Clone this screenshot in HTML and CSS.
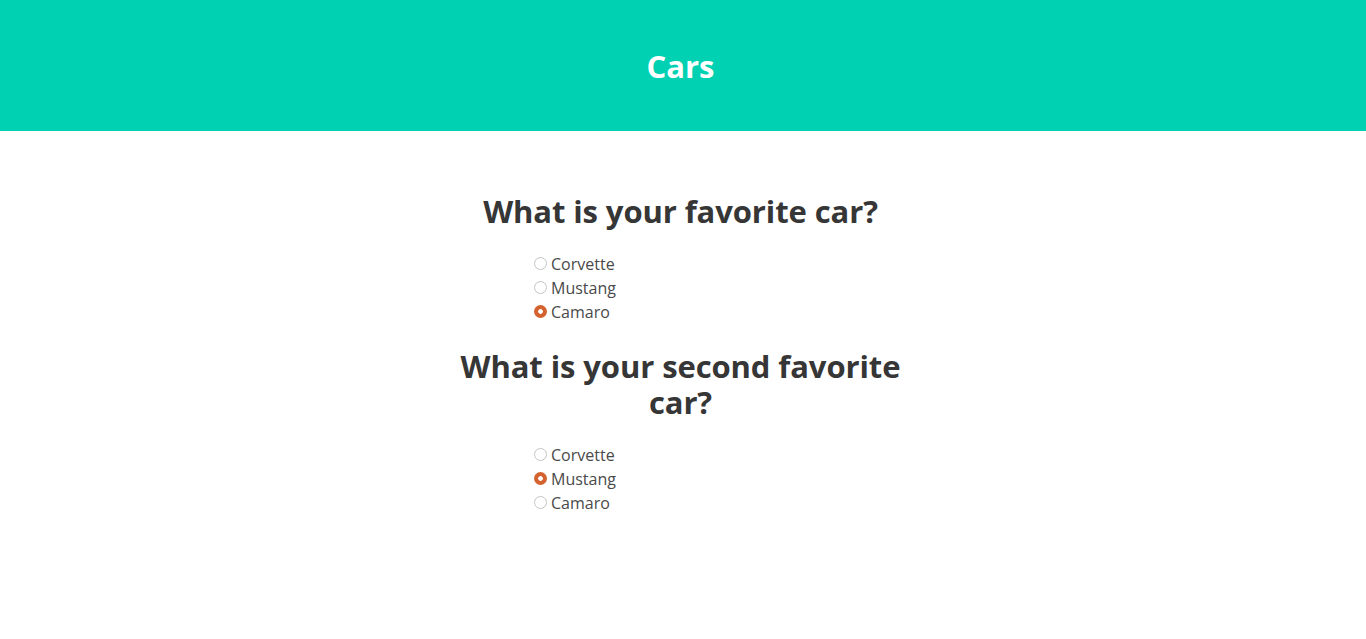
FILE: index.html
```html
<!DOCTYPE html>
<html lang="en">
<head>
<meta charset="utf-8">
<title>Cars</title>
<link rel="stylesheet" href="styles.css">
</head>
<body>
<section class="hero">
  <h1 class="hero-title">Cars</h1>
</section>
<main class="main">
  <div class="column">
    <form class="question">
      <h2 class="title">What is your favorite car?</h2>
      <div class="options">
        <label class="option"><input type="radio" name="fav1"><span>Corvette</span></label>
        <label class="option"><input type="radio" name="fav1"><span>Mustang</span></label>
        <label class="option"><input type="radio" name="fav1" checked><span>Camaro</span></label>
      </div>
    </form>
    <form class="question">
      <h2 class="title">What is your second favorite car?</h2>
      <div class="options">
        <label class="option"><input type="radio" name="fav2"><span>Corvette</span></label>
        <label class="option"><input type="radio" name="fav2" checked><span>Mustang</span></label>
        <label class="option"><input type="radio" name="fav2"><span>Camaro</span></label>
      </div>
    </form>
  </div>
</main>
</body>
</html>
```
FILE: styles.css
```css
* { box-sizing: border-box; }
html, body { margin: 0; padding: 0; }
body {
  font-family: "Open Sans", "Noto Sans", "DejaVu Sans", sans-serif;
  color: #4a4a4a;
  background: #fff;
  font-size: 16px;
  line-height: 24px;
}
.hero {
  background: #00d1b2;
  height: 131px;
  display: flex;
  align-items: center;
  justify-content: center;
  padding-right: 5px;
}
.hero-title {
  margin: 0;
  color: #fff;
  font-size: 31px;
  font-weight: 700;
  line-height: 36px;
  letter-spacing: 0;
}
.main {
  display: flex;
  justify-content: center;
  padding: 62px 5px 0 0;
}
.column {
  width: 455px;
  display: flex;
  flex-direction: column;
}
.question { display: flex; flex-direction: column; }
.question + .question { margin-top: 24px; }
.title {
  margin: 0 0 23px;
  text-align: center;
  color: #363636;
  font-size: 31px;
  font-weight: 700;
  line-height: 36px;
  letter-spacing: -0.1px;
}
.options {
  display: flex;
  flex-direction: column;
  padding-left: 81px;
}
.option {
  display: flex;
  align-items: center;
  height: 24px;
  font-size: 16px;
  color: #4a4a4a;
  cursor: pointer;
}
.option input {
  appearance: none;
  -webkit-appearance: none;
  margin: 0 4px 0 0;
  width: 13px;
  height: 13px;
  border-radius: 50%;
  border: 1px solid #c4c4c4;
  background: #fff;
  flex: none;
  position: relative;
  top: -1px;
}
.option input:checked {
  border: none;
  background: radial-gradient(circle, #fff 0 2px, #d4622f 2.6px);
}
```
